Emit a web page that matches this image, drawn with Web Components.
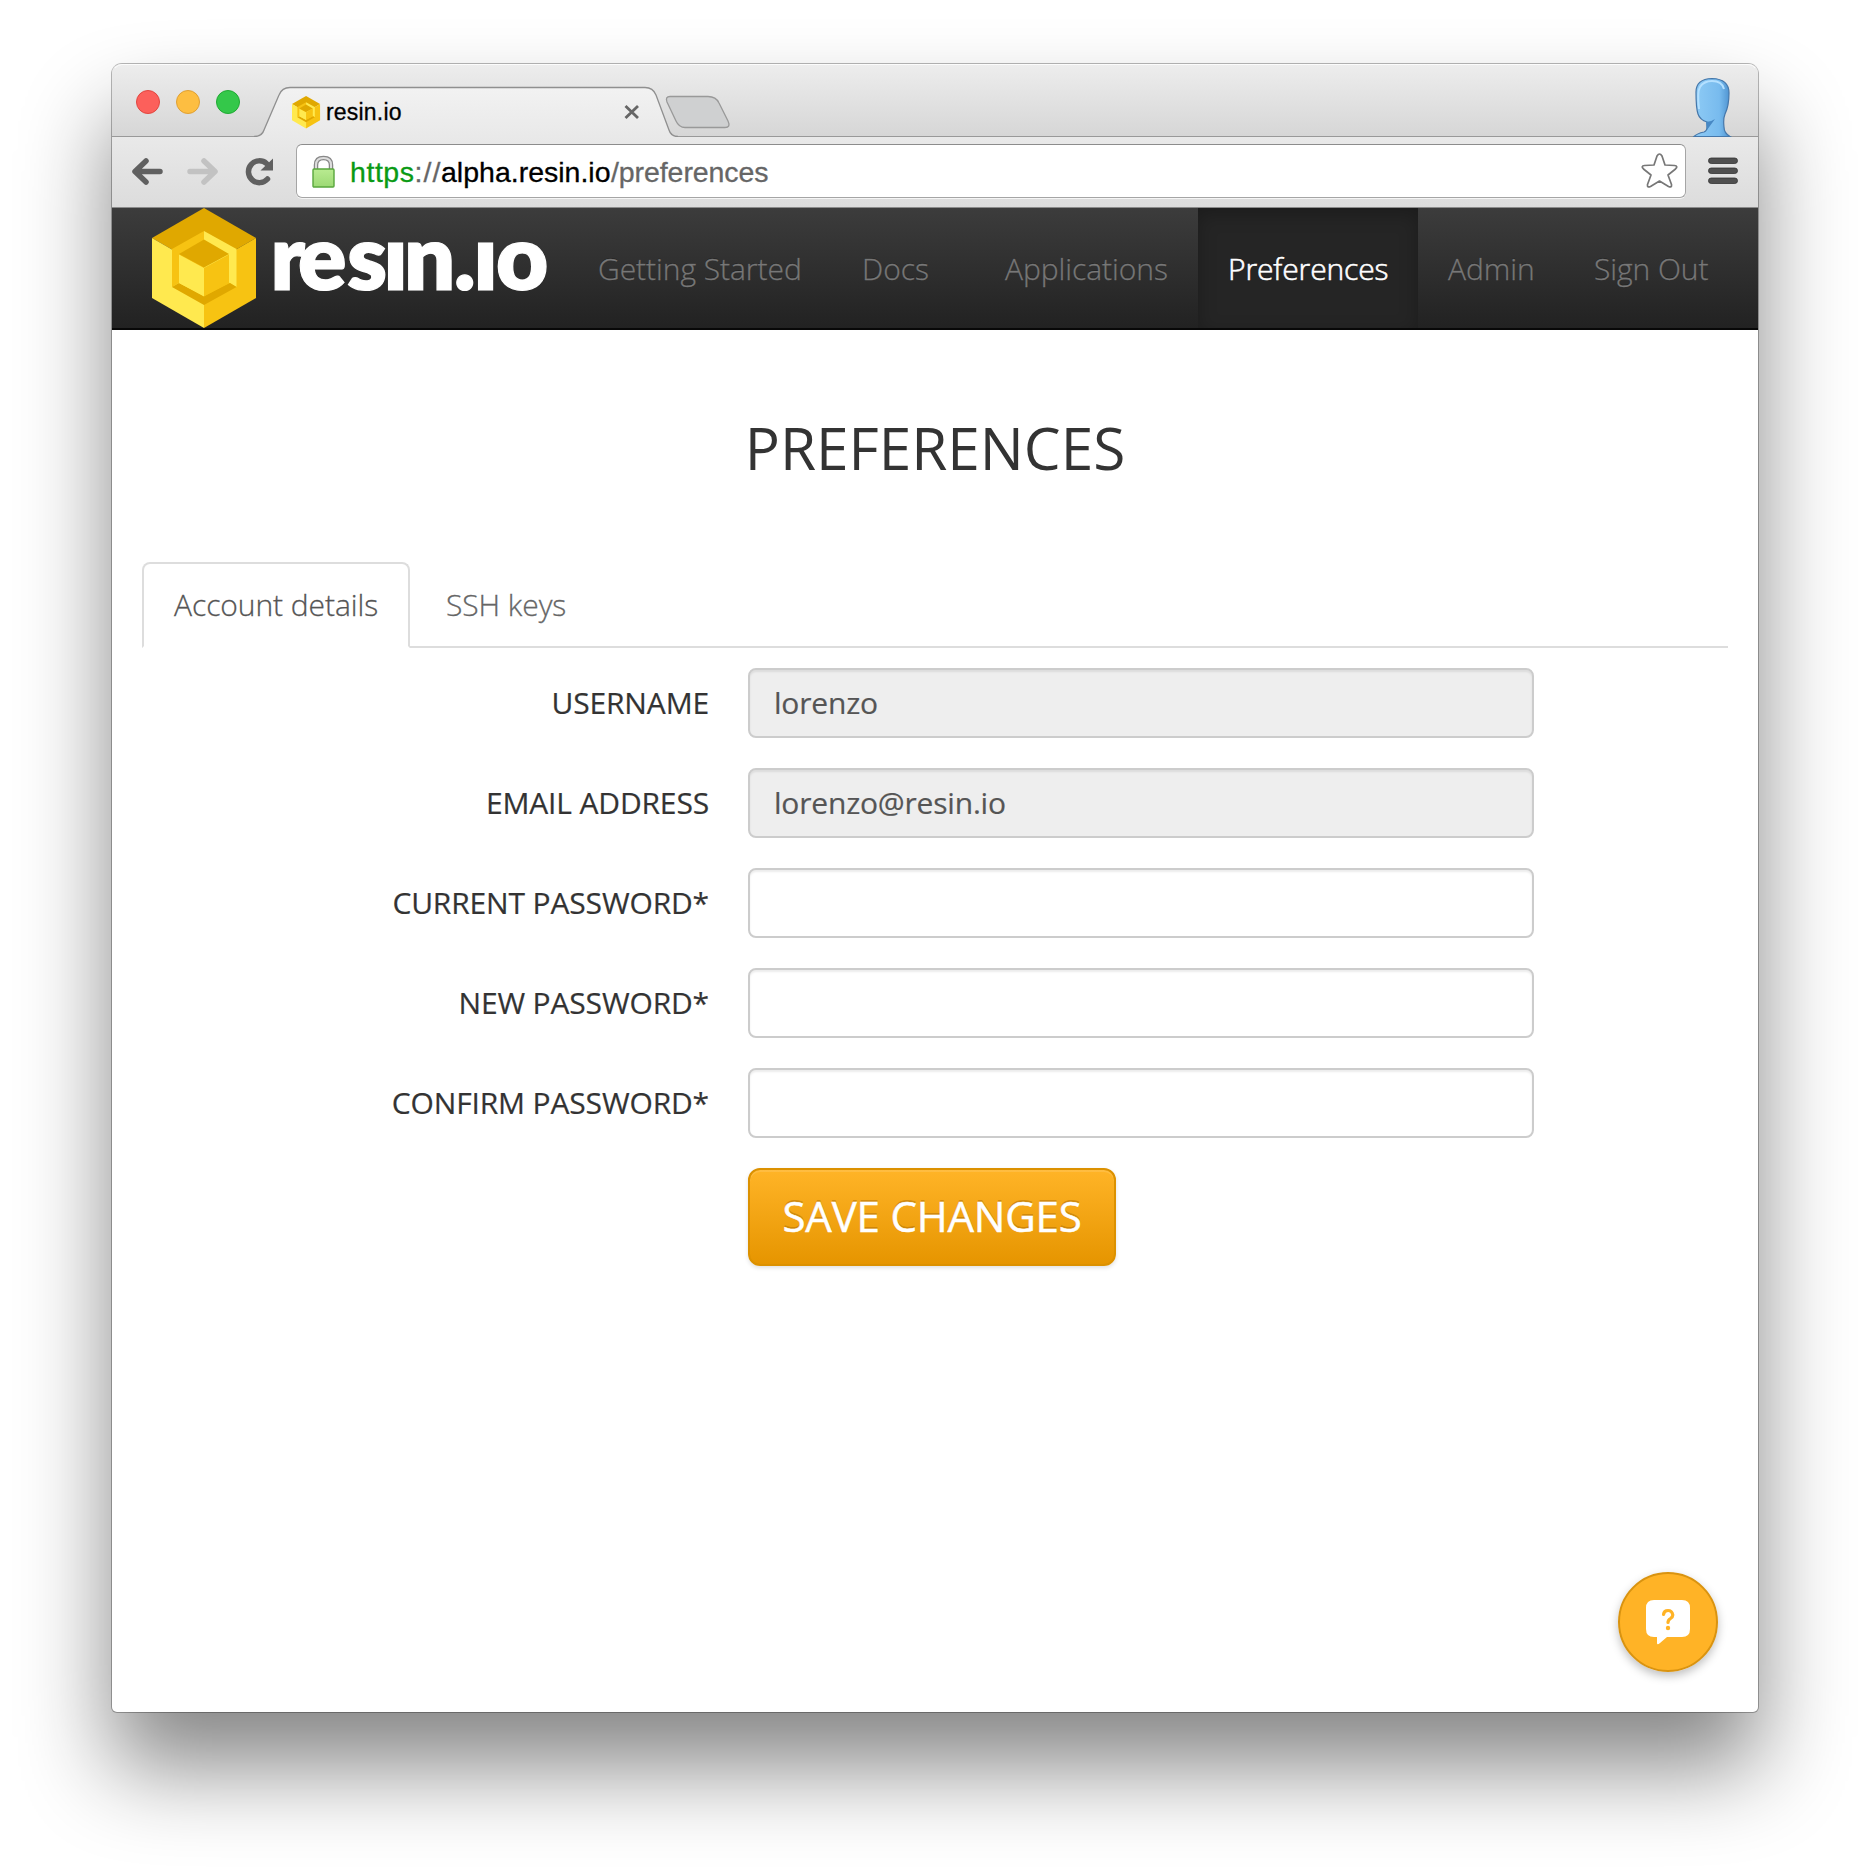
<!DOCTYPE html>
<html lang="en"><head><meta charset="utf-8"><title>resin.io</title>
<style>
html,body{margin:0;background:#fff;font-family:"Open Sans",sans-serif}
body{width:1870px;height:1872px;overflow:hidden;display:flex}
</style></head><body>
<app-window>
  <tab-strip slot="chrome"></tab-strip>
  <tool-bar slot="chrome"></tool-bar>
  <nav-bar>
    <nav-item style="--w:264px">Getting Started</nav-item>
    <nav-item style="--w:143px">Docs</nav-item>
    <nav-item style="--w:223px">Applications</nav-item>
    <nav-item active style="--w:220px">Preferences</nav-item>
    <nav-item style="--w:146px">Admin</nav-item>
    <nav-item style="--w:174px">Sign Out</nav-item>
  </nav-bar>
  <preferences-page></preferences-page>
</app-window>
<script>
const define=(name,html)=>customElements.define(name,class extends HTMLElement{
  constructor(){super();this.attachShadow({mode:'open'}).innerHTML=html;}
});

const cube=`<path fill="#e0a800" d="M52 0 104 30 52 60 0 30Z"/><path fill="#ffe94f" d="M0 30 52 60V120L0 90Z"/><path fill="#f7c312" d="M104 30 52 60V120L104 90Z"/>
<path fill="#f7c312" d="M20 41 52 23V60L20 79Z"/><path fill="#ffe94f" d="M52 23 84.500 41V79L52 60Z"/><path fill="#e0a800" d="M20 79 27 75 52 88 78 75 84.500 79 52 97Z"/>
<path fill="#f7c312" d="M77 46.500V75L52 88.500V60Z"/><path fill="#ffe94f" d="M27 46.500V75L52 88.500V60Z"/><path fill="#e0a800" d="M52 31.500 77 46 52 59.500 27 46Z"/>`;

define('app-window',`<style>
:host{display:flex;flex-direction:column;box-sizing:border-box;width:1646px;height:1648px;margin:64px 0 0 112px;border-radius:10px 10px 5px 5px;background:#fff;box-shadow:0 0 0 1px rgba(0,0,0,.28),0 55px 90px rgba(0,0,0,.48)}
</style><slot name="chrome"></slot><slot></slot>`);

define('tab-strip',`<style>
:host{display:block;height:73px}svg{display:block}
text{font-family:"Liberation Sans",sans-serif}
</style><svg width="1646" height="73" viewBox="0 0 1646 73">
<defs><linearGradient id="s" x2="0" y2="1"><stop stop-color="#ededed"/><stop offset="1" stop-color="#d6d6d6"/></linearGradient>
<linearGradient id="t" x2="0" y2="1"><stop stop-color="#f2f2f2"/><stop offset="1" stop-color="#e9e9e9"/></linearGradient>
<linearGradient id="f"><stop stop-color="#8ecbf5"/><stop offset=".7" stop-color="#78bbee"/><stop offset="1" stop-color="#4d92d0"/></linearGradient></defs>
<path fill="url(#s)" d="M0 73V10Q0 0 10 0H1636Q1646 0 1646 10V73Z"/>
<path fill="none" stroke="#fff" stroke-opacity=".8" d="M3 4Q6 .5 10 .5H1636Q1641 .5 1643 4"/>
<path stroke="#999" d="M0 72.500H1646"/>
<circle cx="36" cy="38" r="11.500" fill="#fc605b" stroke="#e2463f"/><circle cx="76" cy="38" r="11.500" fill="#fdbe41" stroke="#e0a033"/><circle cx="116" cy="38" r="11.500" fill="#34c84a" stroke="#20aa33"/>
<path fill="url(#t)" d="M144 73Q150 71 152 66L167 31Q170 23.500 178 23.500H533Q541 23.500 544 31L557 66Q559 71 564 73Z"/>
<path fill="none" stroke="#8f8f8f" stroke-width="1.300" d="M142 72.500Q150 72.500 152 66L167 31Q170 23.500 178 23.500H533Q541 23.500 544 31L557 66Q559 72.500 566 72.500"/>
<path fill="#cfd0d1" stroke="#999" stroke-width="1.300" d="M558 32.500H596Q604 32.500 607 39L616 57Q619 63.500 613 63.500H573Q567 63.500 564 57L555 38Q553 32.500 558 32.500Z"/>
<g transform="translate(180 32) scale(.27)">${cube}</g>
<text x="214" y="55.500" font-size="23" textLength="75.500" stroke="#000" stroke-width=".3">resin.io</text>
<path stroke="#666" stroke-width="2.800" d="M513.500 42 526 54M526 42 513.500 54"/>
<path fill="url(#f)" stroke="#4577aa" stroke-width="1.200" d="M1582 72.500Q1585 69.500 1592 68Q1595 67 1595 63V58Q1588 56 1586 50Q1584 44 1584 28Q1584 15 1600 14.500Q1617 15 1617 29Q1617 42 1613 50Q1611 55 1612 63Q1612 69 1618 72.500Z"/>
<path fill="none" stroke="#b4e0ff" stroke-width="2" d="M1587 45Q1585 28 1588 23Q1592 17 1600 17Q1610 17 1612 25"/><path fill="#4788c4" d="M1594 58Q1599 58 1603 55L1595 66Z"/>
</svg>`);

define('tool-bar',`<style>
:host{display:flex;box-sizing:border-box;height:71px;background:linear-gradient(#e9e9e9,#dcdcdc);border-bottom:1px solid #8b8b8b;align-items:center;padding:0 19px 2px 20px}
svg{display:block;flex:none}
.nav{width:164px}
.url{display:flex;align-items:center;box-sizing:border-box;width:1390px;height:54px;border:1px solid #a5a5a5;border-top-color:#8c8c8c;border-radius:6px;background:#fff;box-shadow:0 1px 0 #f5f5f5;padding:0 6px 0 13px}
.lock{margin-right:12px}.star{margin-left:auto}.menu{margin-left:22px}
text{font-family:"Liberation Sans",sans-serif}
</style>
<svg class="nav" height="40" viewBox="0 0 164 40"><g fill="none" stroke-width="5.500" stroke-linecap="round" stroke-linejoin="round">
<path stroke="#606060" d="M14 10 3 20.500 14 31M4 20.500H28"/><path stroke="#c2c2c2" d="M72 10 83 20.500 72 31M58 20.500H82"/><path stroke="#606060" d="M134.500 12.500A10.900 10.900 0 1 0 135.500 28"/></g><path fill="#606060" d="M141 7.500V19.500H128.500Z"/></svg>
<div class="url"><svg class="lock" width="27" height="36" viewBox="0 0 27 36"><defs><linearGradient id="l" x2="0" y2="1"><stop stop-color="#b9eb91"/><stop offset="1" stop-color="#9cd974"/></linearGradient></defs><path fill="none" stroke="#888" stroke-width="4.500" d="M6 17V12Q6 5 13.500 5T21 12V17"/><path fill="none" stroke="#ddd" stroke-width="2" d="M6 17V12Q6 5 13.500 5T21 12V17"/><rect x="3" y="16" width="21" height="18" rx="1" fill="url(#l)" stroke="#58a63c" stroke-width="1.400"/></svg>
<svg width="430" height="40"><text y="31" font-size="28.500" fill="#666" stroke="#666" stroke-width=".3"><tspan x="1" textLength="64" fill="#0a9a15" stroke="#0a9a15">https</tspan><tspan x="65.500" textLength="26">://</tspan><tspan x="92" textLength="169.500" fill="#000" stroke="#000">alpha.resin.io</tspan><tspan x="262" textLength="157.500">/preferences</tspan></text></svg>
<svg class="star" width="40" height="40" viewBox="0 0 40 40"><path fill="#fff" stroke="#777" stroke-width="1.700" stroke-linejoin="round" d="M18 5Q20.500 1 23 5L26 14L35.500 14.500Q39.500 15 36.500 18L29 24L32.500 33.500Q33 37 29.500 35.500L20.500 30L11.500 35.500Q8 37 8.500 33.500L12 24L4.500 18Q1.500 15 5.500 14.500L15 14Z"/></svg></div>
<svg class="menu" width="31" height="28"><g fill="#505050" stroke="#333" stroke-width=".8"><rect x=".5" y="1" width="29" height="5.500" rx="2.700"/><rect x=".5" y="11" width="29" height="5.500" rx="2.700"/><rect x=".5" y="21" width="29" height="5.500" rx="2.700"/></g></svg>`);

define('nav-bar',`<style>
:host{display:flex;box-sizing:border-box;height:122px;background:linear-gradient(#3c3c3c,#222);border-bottom:2px solid #080808;padding-left:40px;flex:none}
.logo{width:416px;height:120px;flex:none;overflow:visible}
text{font-family:Lato,sans-serif;font-weight:800;fill:#fff;stroke:#fff;stroke-width:1.2}
</style><svg class="logo" viewBox="0 0 416 120">${cube}<text y="82" font-size="90" x="118.500 146 195 231.500 252 302 321.500 344">resın.ıo</text></svg><slot></slot>`);

define('nav-item',`<style>
:host{display:flex;box-sizing:border-box;width:var(--w);padding:0 0 0 30px;height:120px;align-items:center;font-size:30px;font-weight:300;letter-spacing:-.05px;color:#777;-webkit-text-stroke:.3px;text-shadow:0 -1px 0 rgba(0,0,0,.25);white-space:nowrap}
:host([active]){color:#fff;letter-spacing:-.12px;-webkit-text-stroke:.6px;background:#252525;box-shadow:inset 0 6px 18px rgba(0,0,0,.25)}
</style><slot></slot>`);

define('form-row',`<style>
:host{display:flex;height:70px;align-items:center;font-size:30px;color:#333}
.label{width:567px;text-align:right;margin-right:39px;padding-bottom:2px;letter-spacing:-.15px;-webkit-text-stroke:.2px}
</style><div class="label"><slot name="label"></slot></div><slot></slot>`);

define('text-field',`<style>
:host{display:flex;align-items:center;box-sizing:border-box;width:786px;height:70px;border:2px solid #ccc;border-radius:8px;padding:0 24px 2px;background:#fff;box-shadow:inset 0 2px 2px rgba(0,0,0,.075);color:#555;font-size:30px;letter-spacing:-.2px;-webkit-text-stroke:.2px}
:host([disabled]){background:#eee}
</style><slot></slot>`);

define('preferences-page',`<style>
:host{display:flex;flex-direction:column;padding:0 30px;flex:1;color:#333}
h1{margin:77px 0 0;text-align:center;font-weight:400;font-size:58.5px;line-height:80px}
.tabs{display:flex;box-sizing:border-box;height:86px;margin-top:75px;border-bottom:2px solid #ddd;font-size:30px;font-weight:300;align-items:flex-start;letter-spacing:-.07px;-webkit-text-stroke:.3px}
.tab{display:flex;box-sizing:border-box;align-items:center;height:86px;color:#666;padding:0 36px 2px}
.tab.on{width:268px;padding:0 0 2px 30px;border:2px solid #ddd;border-bottom-color:#fff;border-radius:8px 8px 0 0;background:#fff;color:#555}
.form{display:flex;flex-direction:column;gap:30px;margin-top:20px}
.save{display:flex;box-sizing:border-box;align-items:center;justify-content:center;width:368px;height:98px;margin-left:606px;padding-bottom:3px;border:2px solid #dc9100;border-radius:12px;background:linear-gradient(#ffb427,#e69500);box-shadow:inset 0 2px 0 rgba(255,255,255,.12),0 2px 4px rgba(0,0,0,.12);color:#fff;font-size:42px;letter-spacing:-.2px;-webkit-text-stroke:.5px;text-shadow:0 -2px 0 rgba(150,90,0,.4)}
.help{width:100px;height:100px;margin:auto 10px 40px auto;border-radius:50%;box-shadow:0 4px 10px rgba(0,0,0,.25)}
.help svg{display:block}
</style><h1>PREFERENCES</h1>
<div class="tabs"><div class="tab on">Account details</div><div class="tab">SSH keys</div></div>
<div class="form">
<form-row><span slot="label">USERNAME</span><text-field disabled>lorenzo</text-field></form-row>
<form-row><span slot="label">EMAIL ADDRESS</span><text-field disabled>lorenzo@resin.io</text-field></form-row>
<form-row><span slot="label">CURRENT PASSWORD*</span><text-field></text-field></form-row>
<form-row><span slot="label">NEW PASSWORD*</span><text-field></text-field></form-row>
<form-row><span slot="label">CONFIRM PASSWORD*</span><text-field></text-field></form-row>
<div class="save">SAVE CHANGES</div></div>
<div class="help"><svg width="100" height="100"><circle cx="50" cy="50" r="49" fill="#ffb326" stroke="#d99310" stroke-width="2"/><path fill="#fff" d="M36 28H64Q72 28 72 36V57Q72 65 64 65H49L42 71Q39 73.500 39 71V65H36Q28 65 28 57V36Q28 28 36 28Z"/><path fill="none" stroke="#ffb326" stroke-width="3.200" stroke-linecap="round" d="M45.500 42.500Q46 38.500 50 38.500T54.800 43Q54.800 45 52.500 46.500Q50 48 50 50.500"/><circle cx="50" cy="56" r="2.200" fill="#ffb326"/></svg></div>`);
</script></body></html>
